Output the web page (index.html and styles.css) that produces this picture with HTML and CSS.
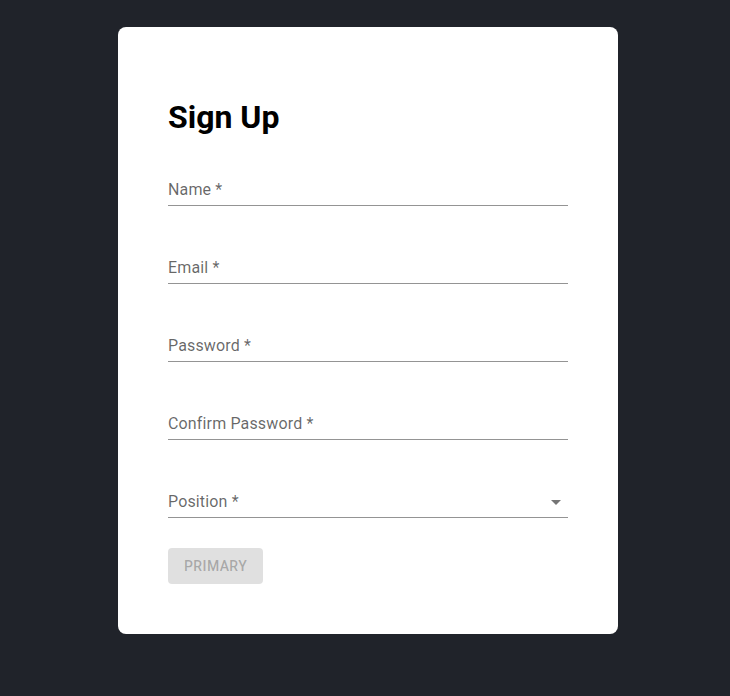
FILE: index.html
```html
<!DOCTYPE html>
<html>
<head>
<meta charset="utf-8">
<link rel="stylesheet" href="styles.css">
</head>
<body>
<main class="page">
  <form class="card">
    <h1 class="title">Sign Up</h1>
    <div class="fields">
      <div class="field">
        <label class="label" for="name">Name *</label>
        <div class="input-root"><input id="name" class="input" type="text"></div>
      </div>
      <div class="field">
        <label class="label" for="email">Email *</label>
        <div class="input-root"><input id="email" class="input" type="email"></div>
      </div>
      <div class="field">
        <label class="label" for="pw">Password *</label>
        <div class="input-root"><input id="pw" class="input" type="password"></div>
      </div>
      <div class="field">
        <label class="label" for="pw2">Confirm Password *</label>
        <div class="input-root"><input id="pw2" class="input" type="password"></div>
      </div>
      <div class="field">
        <label class="label">Position *</label>
        <div class="input-root select">
          <div class="input"></div>
          <svg class="arrow" viewBox="0 0 24 24" width="24" height="24"><path d="M7 10l5 5 5-5z"/></svg>
        </div>
      </div>
      <div class="actions">
        <button class="btn" type="button" disabled>Primary</button>
      </div>
    </div>
  </form>
</main>
</body>
</html>
```

FILE: styles.css
```css
* { box-sizing: border-box; }
html, body { margin: 0; height: 100%; }
body {
  background: #20232a;
  font-family: Roboto, "Noto Sans", sans-serif;
}
.page {
  padding: 27px 0 0 118px;
}
.card {
  width: 500px;
  background: #fff;
  border-radius: 8px;
  padding: 50px;
}
.title {
  margin: 21px 0 0;
  font-size: 32px;
  line-height: 38px;
  font-weight: 700;
  color: #000;
}
.fields {
  display: flex;
  flex-direction: column;
  gap: 30px;
  margin-top: 22px;
}
.field {
  position: relative;
  padding-top: 16px;
  height: 48px;
}
.label {
  position: absolute;
  left: 0;
  top: 20px;
  font-size: 16px;
  line-height: 23px;
  letter-spacing: 0.15px;
  color: rgba(0,0,0,0.6);
}
.input-root {
  position: relative;
  height: 32px;
  border-bottom: 1px solid rgba(0,0,0,0.42);
}
.input {
  display: block;
  width: 100%;
  height: 31px;
  border: 0;
  padding: 4px 0 5px;
  font: inherit;
  font-size: 16px;
  background: transparent;
  outline: none;
}
.arrow {
  position: absolute;
  right: 0;
  top: 4px;
  fill: rgba(0,0,0,0.54);
}
.actions {
  display: flex;
}
.btn {
  height: 36px;
  padding: 6px 16px;
  border: 0;
  border-radius: 4px;
  background: rgba(0,0,0,0.12);
  color: rgba(0,0,0,0.26);
  font-family: Roboto, sans-serif;
  font-size: 14px;
  font-weight: 500;
  letter-spacing: 0.4px;
  text-transform: uppercase;
  line-height: 24px;
}
```
